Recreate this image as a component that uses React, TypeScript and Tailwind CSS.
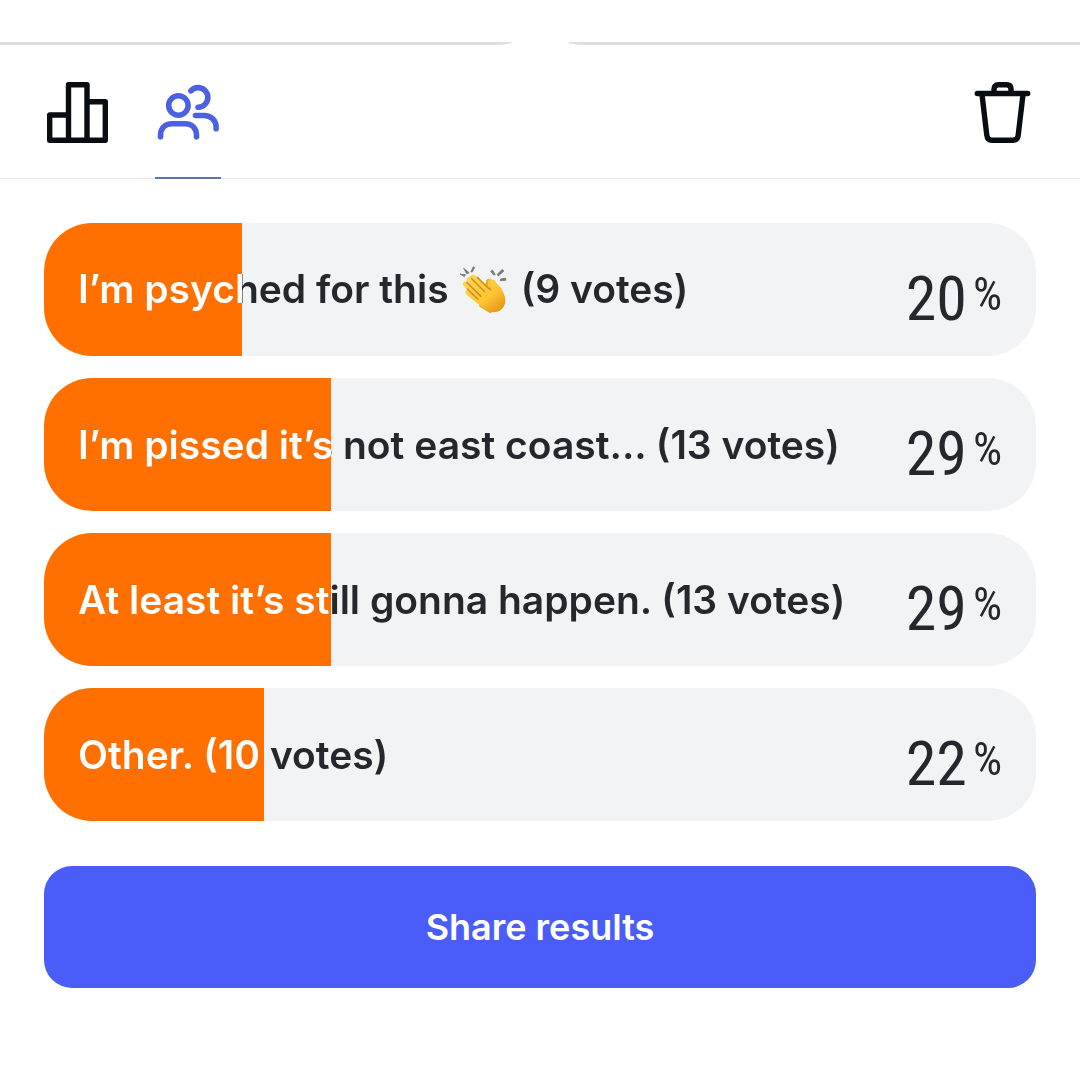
const options = [
  { label: "I’m psyched for this", clap: true, votes: 9 },
  { label: "I’m pissed it’s not east coast...", votes: 13 },
  { label: "At least it’s still gonna happen.", votes: 13 },
  { label: "Other.", votes: 10 },
];

const totalVotes = options.reduce((sum, option) => sum + option.votes, 0);

function split(left: string, right: string, share: number) {
  return { backgroundImage: `linear-gradient(to right, ${left} ${share}%, ${right} ${share}%)` };
}

function ChartIcon() {
  return (
    <svg className="size-16" viewBox="0 0 64 64" fill="none" stroke="currentColor" strokeWidth="5.4" strokeLinejoin="round" aria-hidden="true">
      <path d="M22.5 35H3.7v25.3h55.6V21.8H41" />
      <path d="M22.5 60.3V4.8H41v55.5" />
    </svg>
  );
}

function PeopleIcon() {
  return (
    <svg className="size-16" viewBox="-.5 0 64 64" fill="none" stroke="currentColor" strokeWidth="5.6" strokeLinecap="round" aria-hidden="true">
      <circle cx="21.9" cy="25.5" r="9.7" />
      <path d="M4 56.8v-1.5c0-7 4.6-11.6 11.2-11.6h13.6c6.6 0 11.2 4.6 11.2 11.6v1.5" />
      <path d="M34.4 10.9c1.8-2.1 4.3-3.3 7.2-3.3 5.4 0 9.7 4.4 9.7 9.8s-4.3 9.900-9.700 9.900" />
      <path d="M39 35.500h8.600c6.800 0 12 5 12 11.600v1.600" />
    </svg>
  );
}

function TrashIcon() {
  return (
    <svg className="size-16" viewBox="2 0 64 64" fill="none" stroke="currentColor" strokeWidth="5.4" strokeLinecap="round" strokeLinejoin="round" aria-hidden="true">
      <path d="M9.300 13.500h50.400" />
      <path d="M26 13V9.200c0-2.800 1.500-4.400 4.300-4.400h8.400c2.800 0 4.300 1.600 4.300 4.400V13" />
      <path d="M14 14.500l4.800 40.800c.4 3.400 2 5 5 5h21.400c3 0 4.600-1.600 5-5L55 14.500" />
    </svg>
  );
}

function ClapIcon() {
  return (
    <svg className="mr-3 mb-1.5 ml-2.5 inline-block size-[50px]" viewBox="0 0 50 50" role="img" aria-label="clapping hands">
      <defs>
        <linearGradient id="skin" x1="0" y1="0" x2="1" y2="1">
          <stop offset="0" stopColor="#ffd95c" />
          <stop offset=".6" stopColor="#ffc52f" />
          <stop offset="1" stopColor="#dd8b18" />
        </linearGradient>
      </defs>
      <path
        fill="#777a7d"
        stroke="#777a7d"
        strokeWidth=".8"
        d="M1 9l5.500.8-1.200 1.800zM4.600 3.200l5.600 4.500-2.400 1.200zM14.300 1.800l1.500.6-2.500 4.600-1.500-.2zM33.500 5l2.800 4.800-1.800.1-2.800-3.600zM43.200 4.400l1.700 1.700-5.700 4.900-.9-1.700zM46.500 13.100l.4 2.200-5.700.4.300-1.600z"
      />
      <path fill="#edaa20" d="M27 17c0-3 3-4.200 5-2.500l9 8.500c5 5 6 12 3.500 19L31 48.200l-11-7z" />
      <path fill="#fac63b" d="M29 15.700c1.300-2.700 4.300-1.500 6.300.5l7.700 7.600 1 6-7-1-8-7z" />
      <path fill="url(#skin)" d="M11.300 11.300c1.500-2.300 4-1.900 5.800-.2l14.500 13.500c1-2.800-.7-5.600-.3-7.800.5-2.600 4-2.900 5.500-.1 2.400 4.800 7.600 11.500 9.100 15.800 1.500 4.100-.6 9-3.700 12-3.100 2.900-7.600 3.600-11.800 1.500-4-2-8-4.300-12-7.500L7.600 29.700c-3-2.500-.4-5.800 2.200-4.200-2.800-2-6.600-4.800-6.100-6.900.5-2.400 3.300-2.400 5.100-1-2.200-2.200-1.700-5.500 2.500-6.300z" />
      <path fill="none" stroke="#d58c1b" strokeWidth="1.500" strokeLinecap="round" d="M12.500 13.500l13 13M7.500 17.200L22 31.400M8.300 24l10.600 10M18.300 12.400l11.500 11.200M31.600 24.600l-1.500-1.500" />
    </svg>
  );
}

export default function App() {
  return (
    <main className="min-h-screen bg-white font-['Inter',sans-serif] text-[#24282c]">
      <div className="flex gap-14 pt-[42px]">
        <div className="h-[3px] flex-1 rounded-br-[16px_3px] bg-[#dedede]" />
        <div className="h-[3px] flex-1 rounded-bl-[16px_3px] bg-[#dedede]" />
      </div>

      <header className="flex justify-between border-b border-[#e6e8ea] px-[46px] text-[#090d11]">
        <div className="flex gap-[45px]">
          <button type="button" aria-label="Results" className="py-[34px]">
            <ChartIcon />
          </button>
          <button type="button" aria-label="Voters" className="-mb-px border-b-2 border-[#5875a5] px-px pt-[35px] pb-[33px] text-[#4b61e2]">
            <PeopleIcon />
          </button>
        </div>
        <button type="button" aria-label="Delete poll" className="py-[34px]">
          <TrashIcon />
        </button>
      </header>

      <section className="px-11 pt-11">
        <ul className="flex flex-col gap-[22px]">
          {options.map((option) => {
            const share = (option.votes / totalVotes) * 100;
            return (
              <li key={option.label} className="rounded-[48px] bg-[#f2f3f5]" style={split("#ff7000", "#f2f3f5", share)}>
                <p
                  className="flex h-[133px] items-center justify-between bg-clip-text px-[34px] pt-0.5 text-[39px] font-semibold text-transparent"
                  style={split("#ffffff", "#24282c", share)}
                >
                  <span>
                    {option.label}
                    {option.clap ? <ClapIcon /> : " "}({option.votes} votes)
                  </span>
                  <span className="flex items-start gap-1.5 pt-4 font-['Roboto_Condensed',sans-serif] font-normal">
                    <span className="text-[62px] leading-16">{Math.round(share)}</span>
                    <span className="text-[46px] leading-[54px]">%</span>
                  </span>
                </p>
              </li>
            );
          })}
        </ul>

        <button type="button" className="mt-[45px] h-[122px] w-full rounded-[28px] bg-[#4a5df9] text-4xl font-semibold text-white">
          Share results
        </button>
      </section>
    </main>
  );
}
